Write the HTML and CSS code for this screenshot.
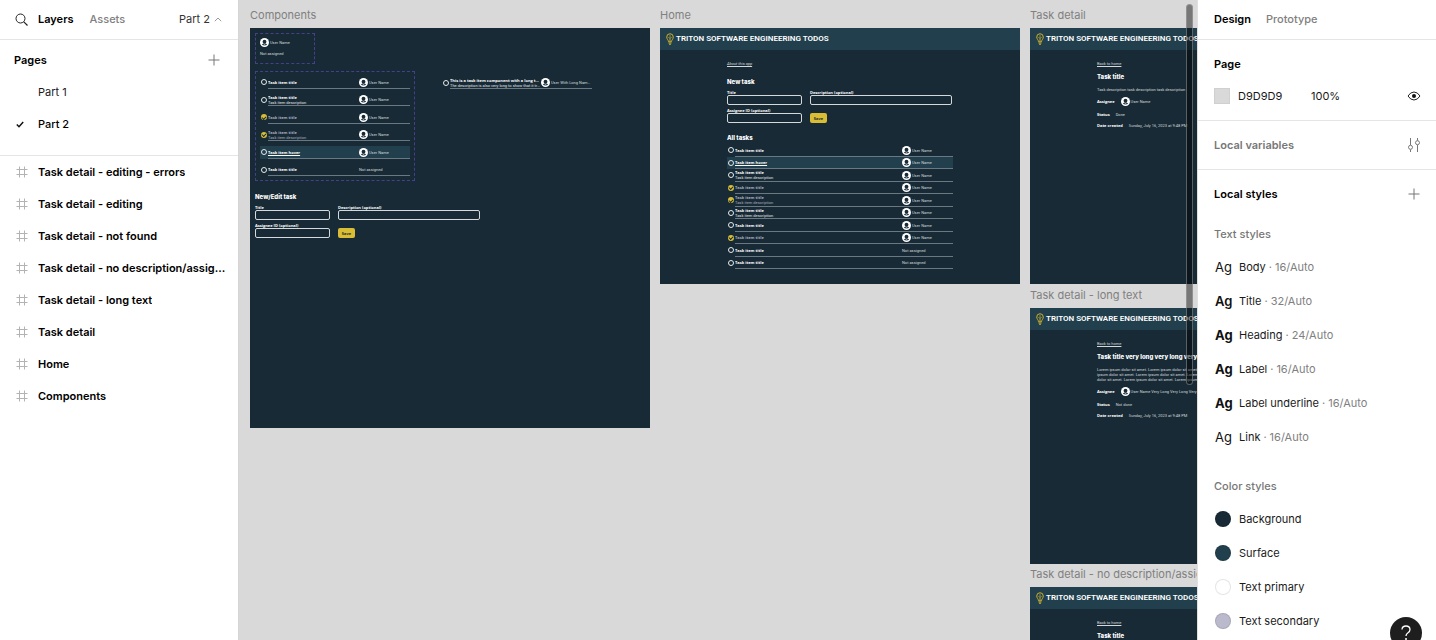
FILE: index.html
```html
<!DOCTYPE html>
<html lang="en">
<head>
<meta charset="utf-8">
<title>Part 2 – Todos</title>
<link rel="stylesheet" href="styles.css">
</head>
<body>
<svg class="sprite" aria-hidden="true">
  <symbol id="avatar" viewBox="0 0 18 18"><circle cx="9" cy="9" r="9" fill="#fff"/><g fill="#172a35"><circle cx="9" cy="7.500" r="3.800"/><path d="M3.800 13.600Q5 11 9 11t5.200 2.600Q12 15.200 9 15.200T3.800 13.600Z"/></g><path d="M6.800 13.400Q9 11.800 11.200 13.400L9 14.300Z" fill="#fff" opacity=".8"/></symbol>
  <symbol id="bulb" viewBox="0 0 16 24"><g fill="none" stroke="#c9b02f" stroke-width="2"><path d="M5 17.500C5 14 1.500 12.500 1.500 8a6.500 6.500 0 0 1 13 0c0 4.500-3.500 6-3.500 9.500z"/><path d="M8 17v-6M5 8l3 3 3-3M8 4.500v3" stroke-width="1.800"/><path d="M5 20h6M6 22.500h4"/></g></symbol>
  <symbol id="frame" viewBox="0 0 12 12"><path d="M3.500.5v11M8.500.5v11M.5 3.500h11M.5 8.500h11" fill="none" stroke="#b3b3b3"/></symbol>
  <symbol id="plus" viewBox="0 0 12 12"><path d="M6 .5v11M.5 6h11" fill="none" stroke="#777"/></symbol>
</svg>
<div class="app">
  <aside class="panel panel-left">
    <header class="bar">
      <button class="icon-btn" aria-label="Search"><svg width="13" height="13" viewBox="0 0 13 13"><circle cx="5.500" cy="5.500" r="4.500" fill="none" stroke="#222"/><path d="M8.800 8.800l3.700 3.700" stroke="#222" stroke-width="1.200"/></svg></button>
      <button class="tab tab-on">Layers</button>
      <button class="tab">Assets</button>
      <button class="tab page-switch">Part 2 <svg width="8" height="5" viewBox="0 0 8 5"><path d="M.8 4.200L4 1l3.200 3.200" fill="none" stroke="#999"/></svg></button>
    </header>
    <section class="pages">
      <div class="pages-head"><h2>Pages</h2><button class="icon-btn" aria-label="Add page"><svg width="12" height="12"><use href="#plus"/></svg></button></div>
      <button class="row"><span class="mark"></span>Part 1</button>
      <button class="row row-on"><span class="mark"><svg width="8" height="7" viewBox="0 0 8 7"><path d="M.8 3.500L3 5.700 7.200 1" fill="none" stroke="#111" stroke-width="1.500"/></svg></span>Part 2</button>
    </section>
    <nav class="layers">
      <button class="row layer"><span class="mark"><svg width="12" height="12"><use href="#frame"/></svg></span><span class="name">Task detail - editing - errors</span></button>
      <button class="row layer"><span class="mark"><svg width="12" height="12"><use href="#frame"/></svg></span><span class="name">Task detail - editing</span></button>
      <button class="row layer"><span class="mark"><svg width="12" height="12"><use href="#frame"/></svg></span><span class="name">Task detail - not found</span></button>
      <button class="row layer"><span class="mark"><svg width="12" height="12"><use href="#frame"/></svg></span><span class="name">Task detail - no description/assignee</span></button>
      <button class="row layer"><span class="mark"><svg width="12" height="12"><use href="#frame"/></svg></span><span class="name">Task detail - long text</span></button>
      <button class="row layer"><span class="mark"><svg width="12" height="12"><use href="#frame"/></svg></span><span class="name">Task detail</span></button>
      <button class="row layer"><span class="mark"><svg width="12" height="12"><use href="#frame"/></svg></span><span class="name">Home</span></button>
      <button class="row layer"><span class="mark"><svg width="12" height="12"><use href="#frame"/></svg></span><span class="name">Components</span></button>
    </nav>
  </aside>

  <main class="canvas">
    <section class="frame at-components">
      <h3 class="frame-name">Components</h3>
      <div class="board board-components">
        <div class="variants variants-user">
          <span class="user"><svg class="avatar"><use href="#avatar"/></svg>User Name</span>
          <span class="user">Not assigned</span>
        </div>
        <div class="variants variants-task">
          <label class="task"><input type="checkbox"><span class="task-body"><span class="task-text"><b>Task item title</b></span><span class="user"><svg class="avatar"><use href="#avatar"/></svg>User Name</span></span></label>
          <label class="task"><input type="checkbox"><span class="task-body"><span class="task-text"><b>Task item title</b><span>Task item description</span></span><span class="user"><svg class="avatar"><use href="#avatar"/></svg>User Name</span></span></label>
          <label class="task done"><input type="checkbox" checked><span class="task-body"><span class="task-text"><b>Task item title</b></span><span class="user"><svg class="avatar"><use href="#avatar"/></svg>User Name</span></span></label>
          <label class="task done"><input type="checkbox" checked><span class="task-body"><span class="task-text"><b>Task item title</b><span>Task item description</span></span><span class="user"><svg class="avatar"><use href="#avatar"/></svg>User Name</span></span></label>
          <label class="task hover"><input type="checkbox"><span class="task-body"><span class="task-text"><b>Task item hover</b></span><span class="user"><svg class="avatar"><use href="#avatar"/></svg>User Name</span></span></label>
          <label class="task"><input type="checkbox"><span class="task-body"><span class="task-text"><b>Task item title</b></span><span class="user">Not assigned</span></span></label>
        </div>
        <div class="sample">
          <label class="task"><input type="checkbox"><span class="task-body"><span class="task-text"><b>This is a task item component with a long title that truncates</b><span>The description is also very long to show that it truncates</span></span><span class="user"><svg class="avatar"><use href="#avatar"/></svg><span class="cut">User With Long Name Here</span></span></span></label>
        </div>
        <form class="form">
          <h4>New/Edit task</h4>
          <label class="field">Title<input type="text"></label>
          <label class="field">Description (optional)<input type="text"></label>
          <label class="field">Assignee ID (optional)<input type="text"></label>
          <button class="save" type="button">Save</button>
        </form>
      </div>
    </section>

    <section class="frame at-home">
      <h3 class="frame-name">Home</h3>
      <div class="board">
        <header class="site"><svg class="bulb"><use href="#bulb"/></svg>TRITON SOFTWARE ENGINEERING TODOS</header>
        <div class="page">
          <a class="link link-about" href="#about">About this app</a>
          <form class="form">
            <h4>New task</h4>
            <label class="field">Title<input type="text"></label>
            <label class="field">Description (optional)<input type="text"></label>
            <label class="field">Assignee ID (optional)<input type="text"></label>
            <button class="save" type="button">Save</button>
          </form>
          <h4 class="all">All tasks</h4>
          <div class="list">
            <label class="task"><input type="checkbox"><span class="task-body"><span class="task-text"><b>Task item title</b></span><span class="user"><svg class="avatar"><use href="#avatar"/></svg>User Name</span></span></label>
            <label class="task hover"><input type="checkbox"><span class="task-body"><span class="task-text"><b>Task item hover</b></span><span class="user"><svg class="avatar"><use href="#avatar"/></svg>User Name</span></span></label>
            <label class="task"><input type="checkbox"><span class="task-body"><span class="task-text"><b>Task item title</b><span>Task item description</span></span><span class="user"><svg class="avatar"><use href="#avatar"/></svg>User Name</span></span></label>
            <label class="task done"><input type="checkbox" checked><span class="task-body"><span class="task-text"><b>Task item title</b></span><span class="user"><svg class="avatar"><use href="#avatar"/></svg>User Name</span></span></label>
            <label class="task done"><input type="checkbox" checked><span class="task-body"><span class="task-text"><b>Task item title</b><span>Task item description</span></span><span class="user"><svg class="avatar"><use href="#avatar"/></svg>User Name</span></span></label>
            <label class="task"><input type="checkbox"><span class="task-body"><span class="task-text"><b>Task item title</b><span>Task item description</span></span><span class="user"><svg class="avatar"><use href="#avatar"/></svg>User Name</span></span></label>
            <label class="task"><input type="checkbox"><span class="task-body"><span class="task-text"><b>Task item title</b></span><span class="user"><svg class="avatar"><use href="#avatar"/></svg>User Name</span></span></label>
            <label class="task done"><input type="checkbox" checked><span class="task-body"><span class="task-text"><b>Task item title</b></span><span class="user"><svg class="avatar"><use href="#avatar"/></svg>User Name</span></span></label>
            <label class="task"><input type="checkbox"><span class="task-body"><span class="task-text"><b>Task item title</b></span><span class="user">Not assigned</span></span></label>
            <label class="task"><input type="checkbox"><span class="task-body"><span class="task-text"><b>Task item title</b></span><span class="user">Not assigned</span></span></label>
          </div>
        </div>
      </div>
    </section>

    <section class="frame at-detail">
      <h3 class="frame-name">Task detail</h3>
      <div class="board">
        <header class="site"><svg class="bulb"><use href="#bulb"/></svg>TRITON SOFTWARE ENGINEERING TODOS</header>
        <div class="page">
          <a class="link" href="#home">Back to home</a>
          <h4 class="detail-title">Task title</h4>
          <p class="desc">Task description task description task description</p>
          <dl class="meta">
            <div><dt>Assignee</dt><dd class="user"><svg class="avatar"><use href="#avatar"/></svg>User Name</dd></div>
            <div><dt>Status</dt><dd>Done</dd></div>
            <div><dt>Date created</dt><dd>Sunday, July 16, 2023 at 9:48 PM</dd></div>
          </dl>
        </div>
      </div>
    </section>

    <section class="frame at-long">
      <h3 class="frame-name">Task detail - long text</h3>
      <div class="board">
        <header class="site"><svg class="bulb"><use href="#bulb"/></svg>TRITON SOFTWARE ENGINEERING TODOS</header>
        <div class="page">
          <a class="link" href="#home">Back to home</a>
          <h4 class="detail-title">Task title very long very long very long very long</h4>
          <p class="desc">Lorem ipsum dolor sit amet. Lorem ipsum dolor sit amet. Lorem ipsum dolor sit amet. Lorem<br>ipsum dolor sit amet. Lorem ipsum dolor sit amet. Lorem ipsum dolor sit amet. Lorem ipsum<br>dolor sit amet. Lorem ipsum dolor sit amet. Lorem ipsum dolor sit amet.</p>
          <dl class="meta">
            <div><dt>Assignee</dt><dd class="user"><svg class="avatar"><use href="#avatar"/></svg>User Name Very Long Very Long Very Long</dd></div>
            <div><dt>Status</dt><dd>Not done</dd></div>
            <div><dt>Date created</dt><dd>Sunday, July 16, 2023 at 9:48 PM</dd></div>
          </dl>
        </div>
      </div>
    </section>

    <section class="frame at-bare">
      <h3 class="frame-name">Task detail - no description/assignee</h3>
      <div class="board">
        <header class="site"><svg class="bulb"><use href="#bulb"/></svg>TRITON SOFTWARE ENGINEERING TODOS</header>
        <div class="page">
          <a class="link" href="#home">Back to home</a>
          <h4 class="detail-title">Task title</h4>
        </div>
      </div>
    </section>
    <div class="thumb"></div>
  </main>

  <aside class="panel panel-right">
    <header class="bar"><button class="tab tab-on">Design</button><button class="tab">Prototype</button></header>
    <section class="page-props">
      <h2>Page</h2>
      <div class="fill"><span class="swatch"></span><span class="hex">D9D9D9</span><span class="pct">100%</span>
        <button class="icon-btn" aria-label="Toggle visibility"><svg width="14" height="10" viewBox="0 0 14 10"><path d="M1 5q2.500-4 6-4t6 4q-2.500 4-6 4T1 5z" fill="none" stroke="#222"/><circle cx="7" cy="5" r="2" fill="#111"/></svg></button></div>
    </section>
    <section class="line-row"><h2 class="muted">Local variables</h2><button class="icon-btn" aria-label="Open variables"><svg width="12" height="14" viewBox="0 0 12 14"><g fill="none" stroke="#777"><path d="M2.500 0v7M2.500 11.500V14M9.500 14V7M9.500 2.500V0"/><circle cx="2.500" cy="9.300" r="2"/><circle cx="9.500" cy="4.700" r="2"/></g></svg></button></section>
    <section class="styles">
      <div class="styles-head"><h2>Local styles</h2><button class="icon-btn" aria-label="Add style"><svg width="12" height="12"><use href="#plus"/></svg></button></div>
      <h3 class="group">Text styles</h3>
      <ul>
        <li><span class="ag">Ag</span>Body<i>·</i><em>16/Auto</em></li>
        <li><span class="ag ag-medium">Ag</span>Title<i>·</i><em>32/Auto</em></li>
        <li><span class="ag ag-bold">Ag</span>Heading<i>·</i><em>24/Auto</em></li>
        <li><span class="ag ag-bold">Ag</span>Label<i>·</i><em>16/Auto</em></li>
        <li><span class="ag ag-bold">Ag</span>Label underline<i>·</i><em>16/Auto</em></li>
        <li><span class="ag">Ag</span>Link<i>·</i><em>16/Auto</em></li>
      </ul>
      <h3 class="group group-color">Color styles</h3>
      <ul>
        <li><span class="dot dot-background"></span>Background</li>
        <li><span class="dot dot-surface"></span>Surface</li>
        <li><span class="dot dot-primary"></span>Text primary</li>
        <li><span class="dot dot-secondary"></span>Text secondary</li>
      </ul>
    </section>
    <button class="help" aria-label="Help"><svg width="12" height="16" viewBox="0 0 12 16"><path d="M2 4.500Q2.200 1 6 1t4 3.500Q10 6.500 8 7.700T6 11" fill="none" stroke="#fff" stroke-width="1.300"/><circle cx="6" cy="14" r="1" fill="#fff"/></svg></button>
  </aside>
</div>
</body>
</html>
```
FILE: styles.css
```css
* { box-sizing: border-box; }
body { margin: 0; font: 11px/16px Inter, sans-serif; color: #1a1a1a; background: #fff; }
h2, h3, h4, p, ul, dl, dd { margin: 0; padding: 0; }
h2 { font-size: 11px; font-weight: 600; color: #000; }
button, input { font: inherit; color: inherit; margin: 0; }
button { border: 0; padding: 0; background: none; }
ul { list-style: none; }
svg { display: block; flex: none; }
.sprite { position: absolute; width: 0; height: 0; }

.app { display: flex; height: 100vh; overflow: hidden; }
.panel { flex: none; background: #fff; position: relative; overflow: hidden; }
.panel-left { width: 239px; border-right: 1px solid #d6d6d6; }
.panel-right { width: 239px; border-left: 1px solid #e0e0e0; }
.bar { display: flex; align-items: center; gap: 16px; height: 40px; padding: 0 16px 1px; border-bottom: 1px solid #e5e5e5; }
.panel-left .bar { padding-left: 15px; }
.panel-left .icon-btn + .tab { margin-left: -6px; }
.panel-right .bar { gap: 15px; }
.tab { color: #808080; font-weight: 500; }
.tab-on { color: #000; font-weight: 600; }
.page-switch { display: flex; align-items: center; gap: 4px; margin-left: auto; color: #333; font-weight: 400; }

.pages { padding: 4px 0 15px; border-bottom: 1px solid #e5e5e5; }
.pages-head { display: flex; align-items: center; justify-content: space-between; height: 32px; padding: 0 18px 0 14px; }
.row { display: flex; align-items: center; width: 100%; height: 32px; padding: 0 12px 0 16px; text-align: left; }
.row-on { font-weight: 500; color: #000; }
.mark { flex: none; width: 22px; }
.layer { font-weight: 600; color: #000; }
.name { overflow: hidden; white-space: nowrap; text-overflow: ellipsis; }

.canvas { flex: 1; position: relative; overflow: hidden; background: #d9d9d9; }
.frame { position: absolute; width: 360px; }
.at-components { left: 11px; top: 7px; width: 400px; }
.at-home { left: 421px; top: 7px; }
.at-detail { left: 791px; top: 7px; }
.at-long { left: 791px; top: 287px; }
.at-bare { left: 791px; top: 566px; }
.frame-name { padding-bottom: 5px; font-size: 11px; font-weight: 400; color: #808080; white-space: nowrap; }
.board { min-height: 256px; background: #172a35; color: #fff; font: 4px/5px Roboto, sans-serif; }
.board h4 { font-family: Inter, sans-serif; font-size: 6px; line-height: 8px; font-weight: 800; }
.site { display: flex; align-items: center; gap: 2px; height: 22px; padding-left: 6px; background: #223f4d; font-size: 8px; line-height: 10px; font-weight: 600; white-space: nowrap; }
.bulb { width: 8px; height: 12px; }
.page { padding: 11px 67px 14px; }
.link { display: block; width: max-content; height: 5px; color: #d5d9dc; }
.link-about { font-style: italic; }

.board-components { display: grid; grid-template-columns: 160px 150px; column-gap: 27px; align-content: start; min-height: 400px; padding: 5px; }
.variants { border: 1px dashed #46408c; padding: 4px; }
.variants-user { grid-column: 1 / -1; display: flex; flex-direction: column; gap: 4px; width: 60px; height: 31px; margin-bottom: 7px; }
.variants-task { display: grid; grid-auto-rows: 1fr; gap: 5px; height: 110px; }
.sample { height: 13px; margin-top: 5px; display: grid; }
.board-components .form { grid-column: 1 / -1; padding-top: 12px; }
.user { display: flex; align-items: center; gap: 1px; min-width: 0; color: #d5d9dc; white-space: nowrap; }
.avatar { width: 9px; height: 9px; }
.cut, .task-text > * { overflow: hidden; white-space: nowrap; text-overflow: ellipsis; }

.task { display: grid; grid-template-columns: 8px 1fr; min-height: 0; align-items: stretch; }
.task input { appearance: none; align-self: center; width: 6px; height: 6px; margin-left: 1px; border: 1px solid #e8eaec; border-radius: 50%; }
.task input:checked { display: grid; place-items: center; border: 0; background: #d9bd35; }
.task input:checked::after { content: ""; width: 3px; height: 2px; border: solid #172a35; border-width: 0 0 1px 1px; rotate: -45deg; }
.task-body { display: grid; grid-template-columns: 1fr 51px; align-items: center; min-width: 0; padding-top: 1px; border-bottom: 1px solid #6a7881; }
.task-text { display: grid; min-width: 0; color: #e3e6e8; padding-right: 1px; }
.task-text b { font-family: "Open Sans", sans-serif; font-weight: 700; color: #fff; }
.done .task-text, .done .task-text b { color: #a9adbd; }
.hover { background: #223f4d; }
.hover .task-text > b { overflow: visible; text-decoration: underline; }

.form { display: grid; grid-template-columns: 75px 1fr; column-gap: 8px; row-gap: 3px; width: 225px; }
.page .form { margin-top: 12px; }
.form h4 { grid-column: 1 / -1; margin-bottom: 1px; }
.field { display: flex; flex-direction: column; font-family: "Open Sans", sans-serif; font-weight: 700; white-space: nowrap; }
.field input { width: 100%; height: 10px; padding: 0 2px; border: 1px solid #d5d9dc; border-radius: 2px; background: #172a35; }
.save { align-self: end; justify-self: start; width: 17px; height: 10px; border-radius: 2px; background: #d9bd35; color: #172a35; font-family: "Open Sans", sans-serif; font-weight: 700; }
.all { padding-top: 11px; }
.list { display: grid; grid-auto-rows: 1fr; height: 125px; margin-top: 2px; }

.detail-title { margin-top: 7px; white-space: nowrap; }
.desc { margin-top: 6px; color: #d5d9dc; white-space: nowrap; }
.meta { display: grid; gap: 6px; margin-top: 5px; white-space: nowrap; color: #d5d9dc; }
.meta > div { display: flex; align-items: center; gap: 6px; }
.meta dt { font-family: "Open Sans", sans-serif; font-weight: 700; color: #fff; }
.thumb { position: absolute; top: 4px; right: 4px; width: 7px; height: 381px; border: 1px solid rgba(170, 170, 170, .5); border-radius: 4px; background: rgba(0, 0, 0, .45); }

.page-props { padding: 8px 15px 8px 16px; border-bottom: 1px solid #e5e5e5; }
.page-props h2 { line-height: 32px; }
.fill { display: flex; align-items: center; height: 32px; }
.fill .icon-btn { margin-left: auto; }
.swatch { width: 16px; height: 16px; margin-right: 8px; background: #d9d9d9; border: 1px solid #d0d0d0; }
.hex { width: 73px; }
.line-row, .styles-head { display: flex; align-items: center; justify-content: space-between; height: 48px; padding: 0 16px; }
.line-row { height: 49px; border-bottom: 1px solid #e5e5e5; }
.muted, .group { color: #777; }
.group { padding: 0 16px; font-size: 11px; line-height: 32px; font-weight: 500; }
.group-color { padding-top: 16px; }
.styles li { display: flex; align-items: center; height: 34px; padding: 0 16px; }
.styles i { margin: 0 3px; font-style: normal; color: #808080; }
.styles em { font-style: normal; color: #808080; }
.ag { width: 25px; padding: 0 0 1px 1px; font-size: 13px; color: #111; }
.ag-medium { font-weight: 600; }
.ag-bold { font-weight: 700; }
.dot { width: 16px; height: 16px; margin: 0 8px 0 1px; border: 1px solid rgba(0, 0, 0, .1); border-radius: 50%; }
.dot-background { background: #172a35; }
.dot-surface { background: #223f4d; }
.dot-primary { background: #fff; }
.dot-secondary { background: #bbb9cc; }
.help { position: absolute; right: 14px; bottom: -9px; display: grid; place-items: center; width: 32px; height: 32px; border-radius: 50%; background: #1e1e1e; }
```
